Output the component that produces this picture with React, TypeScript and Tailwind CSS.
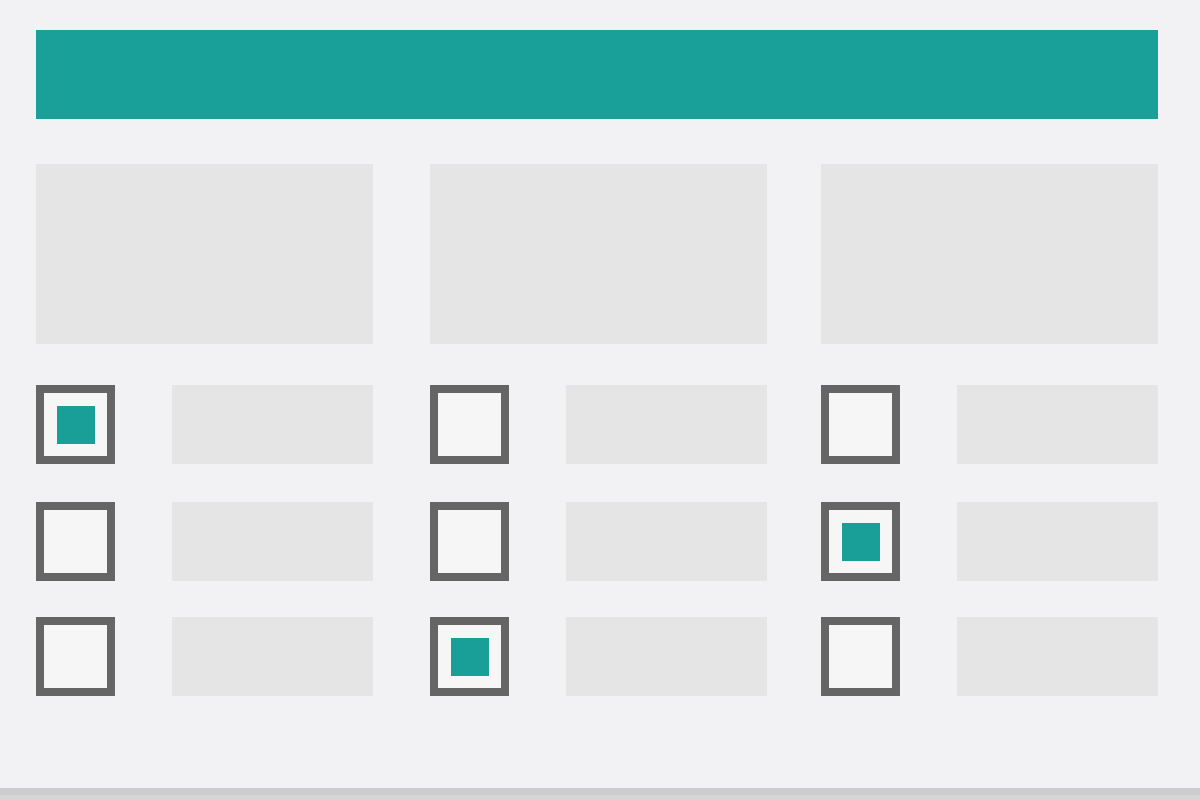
import React from "react";

// 3x3 grid of checkbox rows, with a filled box marking the selected one in each row
const rows = [
  [true, false, false],
  [false, false, true],
  [false, true, false],
];

const rowGaps = ["mt-[41px]", "mt-[38px]", "mt-[36px]"];
const colGaps = ["", "ml-[57px]", "ml-[54px]"];

function Box({ checked }: { checked: boolean }) {
  return (
    <div className="w-[79px] h-[79px] shrink-0 border-[8px] border-[#656565] bg-[#f6f6f7] flex items-center justify-center">
      {checked && <div className="w-[38px] h-[38px] bg-[#1a9e98]" />}
    </div>
  );
}

export default function App() {
  return (
    <div className="w-[1200px] h-[800px] bg-[#f2f2f4] flex flex-col overflow-hidden">
      <div className="pl-[36px] pt-[30px] flex-1">
        <div className="w-[1122px] h-[89px] bg-[#19a098]" />

        {/* top placeholder cards */}
        <div className="flex mt-[45px]">
          {colGaps.map((g, i) => (
            <div key={i} className={`${g} w-[337px] h-[180px] bg-[#e5e5e6]`} />
          ))}
        </div>

        {rows.map((row, r) => (
          <div key={r} className={`flex ${rowGaps[r]}`}>
            {row.map((checked, c) => (
              <div key={c} className={`${colGaps[c]} w-[337px] flex items-center`}>
                <Box checked={checked} />
                <div className="ml-[57px] w-[201px] h-[79px] bg-[#e5e5e6]" />
              </div>
            ))}
          </div>
        ))}
      </div>
      <div className="h-[7px] bg-[#cdcdcd]" />
      <div className="h-[5px] bg-[#d6d6d6]" />
    </div>
  );
}
